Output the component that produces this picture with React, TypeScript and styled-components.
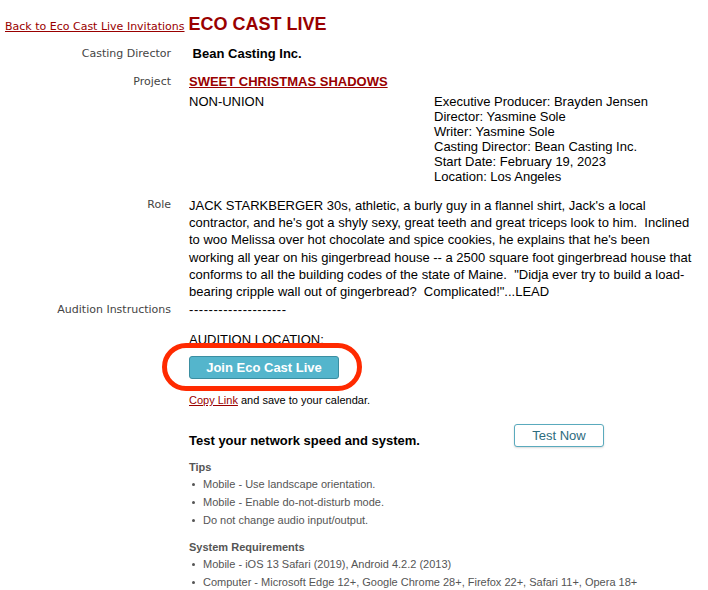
import React from 'react';
import styled, { createGlobalStyle } from 'styled-components';

const GlobalStyle = createGlobalStyle`
  html, body {
    margin: 0;
    padding: 0;
    background: #ffffff;
  }
  body {
    font-family: 'Liberation Sans', Arial, Helvetica, sans-serif;
    color: #000;
  }
`;

const credits = [
  'Executive Producer: Brayden Jensen',
  'Director: Yasmine Sole',
  'Writer: Yasmine Sole',
  'Casting Director: Bean Casting Inc.',
  'Start Date: February 19, 2023',
  'Location: Los Angeles',
];

const tips = [
  'Mobile - Use landscape orientation.',
  'Mobile - Enable do-not-disturb mode.',
  'Do not change audio input/output.',
];

const requirements = [
  'Mobile - iOS 13 Safari (2019), Android 4.2.2 (2013)',
  'Computer - Microsoft Edge 12+, Google Chrome 28+, Firefox 22+, Safari 11+, Opera 18+',
];

const App = () => {
  return (
    <>
      <GlobalStyle />
      <Page>
        <HeaderRow>
          <BackLink href='#'>Back to Eco Cast Live Invitations</BackLink>
          <Title>ECO CAST LIVE</Title>
        </HeaderRow>

        <Row $gap={9}>
          <Label>Casting Director</Label>
          <Strong>&nbsp;Bean Casting Inc.</Strong>
        </Row>

        <Row $gap={12}>
          <Label>Project</Label>
          <div>
            <ProjectLink href='#'>SWEET CHRISTMAS SHADOWS</ProjectLink>
            <Details>
              <div>NON-UNION</div>
              <div>
                {credits.map((line) => (
                  <div key={line}>{line}</div>
                ))}
              </div>
            </Details>
          </div>
        </Row>

        <Row $gap={13}>
          <Label>Role</Label>
          <RoleText>
            JACK STARKBERGER 30s, athletic, a burly guy in a flannel shirt, Jack's a local
            <br />
            contractor, and he's got a shyly sexy, great teeth and great triceps look to him.&nbsp; Inclined
            to woo Melissa over hot chocolate and spice cookies, he explains that he's been working all
            year on his gingerbread house -- a 2500 square foot gingerbread house that conforms to all the
            building codes of the state of Maine.&nbsp; "Didja ever try to build a load-bearing cripple wall
            out of gingerbread?&nbsp; Complicated!"...LEAD
          </RoleText>
        </Row>

        <Row $gap={2}>
          <Label>Audition Instructions</Label>
          <div>
            <Divider>--------------------</Divider>
            <Plain $top={14}>AUDITION LOCATION:</Plain>
            <JoinArea>
              <Highlight />
              <JoinButton type='button'>Join Eco Cast Live</JoinButton>
            </JoinArea>
            <CopyLine>
              <SmallLink href='#'>Copy Link</SmallLink> and save to your calendar.
            </CopyLine>

            <TestRow>
              <TestTitle>Test your network speed and system.</TestTitle>
              <TestButton type='button'>Test Now</TestButton>
            </TestRow>

            <SectionTitle>Tips</SectionTitle>
            <List>
              {tips.map((t) => (
                <Item key={t}>{t}</Item>
              ))}
            </List>

            <SectionTitle>System Requirements</SectionTitle>
            <List>
              {requirements.map((t) => (
                <Item key={t}>{t}</Item>
              ))}
            </List>
          </div>
        </Row>
      </Page>
    </>
  );
};

const Page = styled.div`
  padding: 14px 12px 0 0;
  width: 708px;
  box-sizing: border-box;
`;

const HeaderRow = styled.div`
  display: flex;
  align-items: baseline;
  gap: 4px;
  padding-left: 5px;
  line-height: 20px;
`;

const BackLink = styled.a`
  font-family: 'DejaVu Sans', Verdana, sans-serif;
  font-size: 11px;
  color: #990000;
  text-decoration: underline;
  white-space: nowrap;
`;

const Title = styled.h1`
  margin: 0;
  font-size: 18px;
  font-weight: bold;
  color: #990000;
`;

const Row = styled.div<{ $gap: number }>`
  display: grid;
  grid-template-columns: 184px 1fr;
  column-gap: 5px;
  margin-top: ${(p) => p.$gap}px;
  font-size: 13px;
  line-height: 16px;
`;

const Label = styled.div`
  font-family: 'DejaVu Sans', Verdana, sans-serif;
  font-size: 11px;
  color: #444;
  text-align: right;
  padding-right: 13px;
  white-space: nowrap;
`;

const Strong = styled.div`
  font-weight: bold;
`;

const ProjectLink = styled.a`
  font-weight: bold;
  color: #990000;
  text-decoration: underline;
`;

const Details = styled.div`
  display: grid;
  grid-template-columns: 245px 1fr;
  margin-top: 4px;
  line-height: 15px;
`;

const RoleText = styled.div`
  line-height: 17.2px;
`;

const Plain = styled.div<{ $top?: number }>`
  margin-top: ${(p) => p.$top ?? 0}px;
`;

const Divider = styled.div`
  letter-spacing: 0.55px;
`;

const JoinArea = styled.div`
  position: relative;
  display: inline-block;
  margin-top: 8px;
`;

const Highlight = styled.span`
  position: absolute;
  left: -27px;
  right: -23px;
  top: -13px;
  bottom: -12px;
  border: 5px solid #ff2a00;
  border-radius: 30px;
  box-sizing: border-box;
  pointer-events: none;
`;

const JoinButton = styled.button`
  display: block;
  width: 150px;
  height: 23px;
  padding: 0;
  background: #54b5cc;
  border: 1px solid #3b8ea1;
  border-radius: 3px;
  color: #fff;
  font-family: 'Liberation Sans', Arial, sans-serif;
  font-size: 13px;
  font-weight: bold;
  cursor: pointer;
`;

const CopyLine = styled.div`
  margin-top: 14px;
  font-size: 11px;
  line-height: 14px;
`;

const SmallLink = styled.a`
  color: #990000;
  text-decoration: underline;
`;

const TestRow = styled.div`
  display: grid;
  grid-template-columns: 325px auto;
  align-items: start;
  margin-top: 17px;
`;

const TestTitle = styled.div`
  margin-top: 9px;
  font-weight: bold;
  font-size: 13px;
`;

const TestButton = styled.button`
  justify-self: start;
  width: 90px;
  height: 23px;
  padding: 0;
  background: #fff;
  border: 1px solid #5aaabd;
  border-radius: 3px;
  box-shadow: 0 1px 2px rgba(0, 0, 0, 0.15);
  color: #2d6c7e;
  font-family: 'Liberation Sans', Arial, sans-serif;
  font-size: 13px;
  cursor: pointer;
`;

const SectionTitle = styled.div`
  margin-top: 11px;
  font-size: 11px;
  font-weight: bold;
  line-height: 14px;
  color: #555;
`;

const List = styled.ul`
  margin: 1px 0 0;
  padding: 0;
  list-style: none;
`;

const Item = styled.li`
  display: flex;
  align-items: center;
  font-size: 11px;
  line-height: 18px;
  color: #555;
  white-space: nowrap;

  &::before {
    content: '';
    width: 3px;
    height: 3px;
    border-radius: 50%;
    background: #555;
    margin: 0 8px 0 3px;
    flex-shrink: 0;
  }
`;

export default App;
